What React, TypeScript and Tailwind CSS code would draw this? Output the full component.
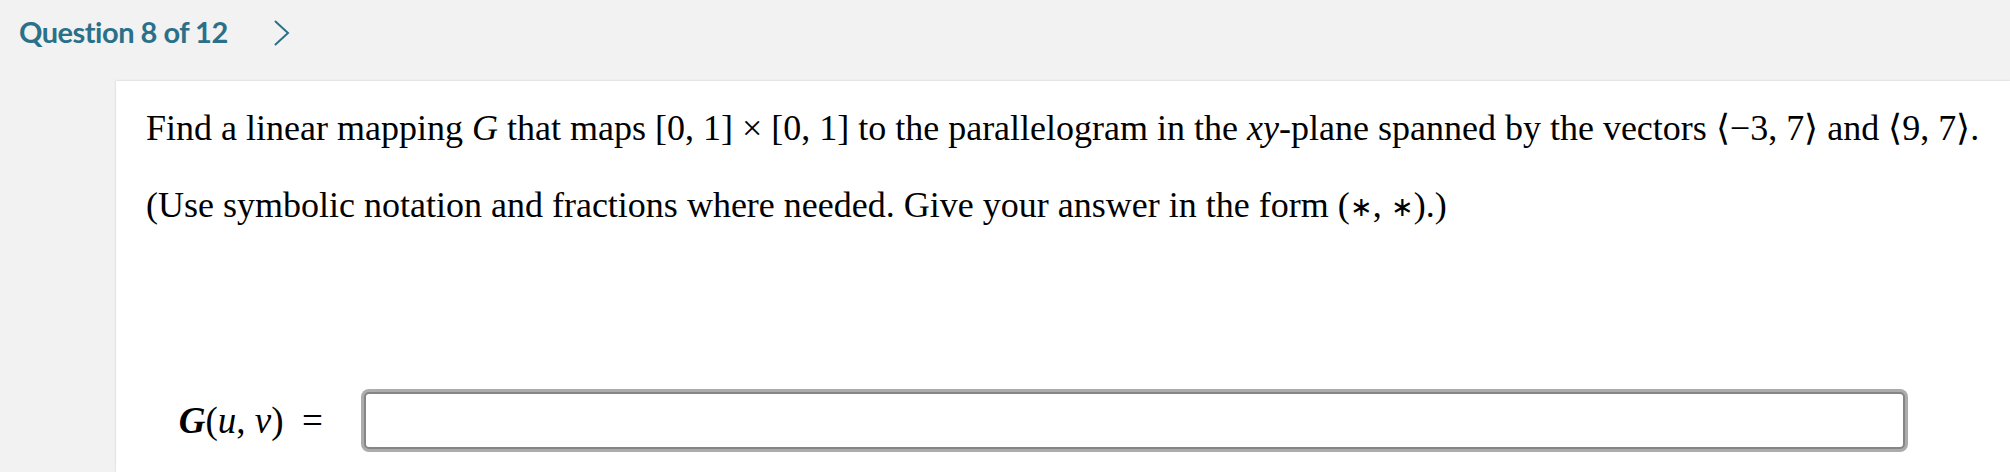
import React from "react";

const serif = { fontFamily: '"Liberation Serif", "Times New Roman", serif' };

function Ast() {
  return <span className="text-[27px] relative top-[-1px]">∗</span>;
}

export default function App() {
  return (
    <div className="w-[2010px] h-[472px] overflow-hidden bg-[#f2f2f2] flex flex-col">
      <div className="h-[81px] shrink-0 flex items-start pl-[19px] pt-[13px]">
        <span
          className="w-[255px] shrink-0 text-[29px] font-bold text-[#2b7089] leading-[38px] tracking-[-0.5px]"
          style={{ fontFamily: '"Lato", "Open Sans", sans-serif' }}
        >
          Question 8 of 12
        </span>
        <svg
          className="mt-[7px]"
          width="16"
          height="26"
          viewBox="0 0 16 26"
          fill="none"
        >
          <polyline
            points="1.5,1.5 14,13 1.5,24.5"
            stroke="#2b7089"
            strokeWidth="2"
            strokeLinecap="round"
            strokeLinejoin="miter"
          />
        </svg>
      </div>
      <div className="flex-1 ml-[116px] bg-white shadow-[0_0_2px_rgba(0,0,0,0.18)] pl-[30px] pt-[26px]">
        <p className="text-[36px] leading-[43px] text-black whitespace-nowrap" style={serif}>
          Find a linear mapping <i>G</i> that maps [0, 1] × [0, 1] to the parallelogram in the{" "}
          <i>xy</i>-plane spanned by the vectors ⟨−3, 7⟩ and ⟨9, 7⟩.
        </p>
        <p className="mt-[34px] text-[36px] leading-[43px] text-black whitespace-nowrap" style={serif}>
          (Use symbolic notation and fractions where needed. Give your answer in the form (<Ast />, <Ast />).)
        </p>
        <div className="mt-[162px] flex items-center">
          <div className="w-[177px] shrink-0 text-right text-[37px] leading-[43px] text-black" style={serif}>
            <i className="font-semibold">G</i>(<i>u</i>, <i>v</i>)&nbsp;&nbsp;=
          </div>
          <div className="ml-[41px] w-[1541px] h-[57px] rounded-[5px] border-2 border-[#858585] bg-white shadow-[0_0_0_3px_#acacac]" />
        </div>
      </div>
    </div>
  );
}
